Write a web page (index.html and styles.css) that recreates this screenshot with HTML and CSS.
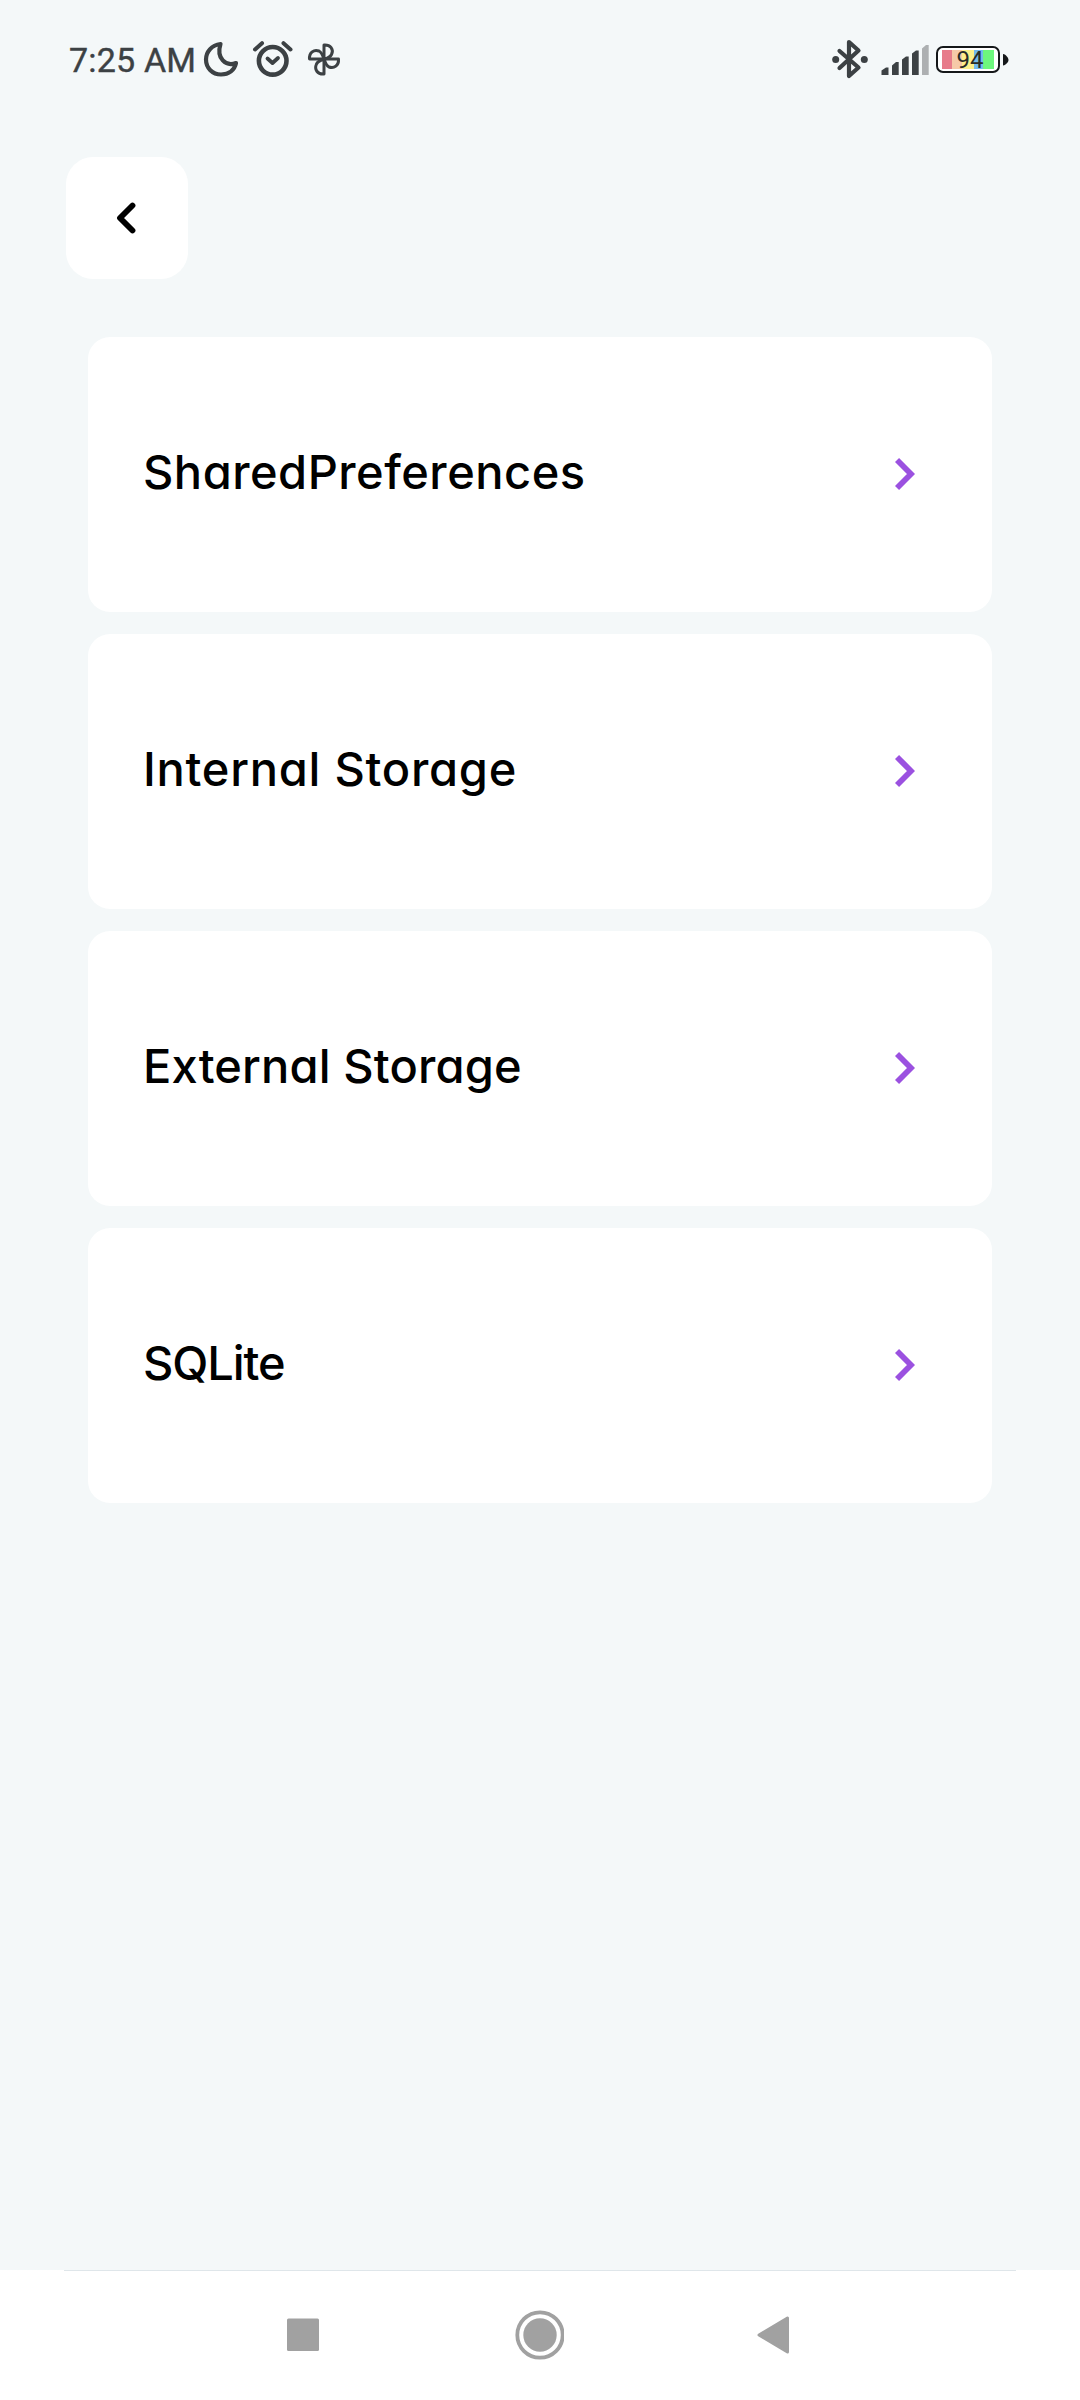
FILE: index.html
```html
<!DOCTYPE html>
<html lang="en">
<head>
<meta charset="utf-8">
<title>Storage</title>
<link rel="stylesheet" href="styles.css">
</head>
<body>
<div class="screen">
  <header class="status">
    <span class="clock">7:25 AM</span>
    <svg class="status-icons" width="140" height="44" viewBox="202 37.500 140 44" fill="none" stroke="#3c4144" stroke-width="4.200" stroke-linecap="round" stroke-linejoin="round">
      <path d="M220.500 43.500 C211.500 44.500 206 51.500 206 59 C206 67.500 212.500 74 221 74 C229 74 234.500 69.500 236 62.500 C226 66.500 216 58 220.500 43.500 Z"/>
      <circle cx="272.700" cy="60.300" r="13.800" stroke-width="4.600"/>
      <path d="M255 49 L262 42.700 M290.500 49 L283.500 42.700" stroke-width="4"/>
      <path d="M267.500 58 L272.500 62.500 L278 57.500" stroke-width="3.800"/>
      <g stroke-width="3">
        <path d="M324 58.500 V44.500 C330.500 44 334 49 331.500 54 C330 57 327 58 324 58.500 Z"/>
        <path d="M324 58.500 H338.500 C339 65 334 68.500 329 66.500 C326 65 325 61.500 324 58.500 Z"/>
        <path d="M324 58.500 V73.500 C317.500 74 314 69 316.500 63.500 C318 60.500 321 59.500 324 58.500 Z"/>
        <path d="M324 58.500 H309.500 C309 52 314 48.500 319 50.500 C322 52 323 55.500 324 58.500 Z"/>
      </g>
    </svg>
    <svg class="radio-icons" width="100" height="44" viewBox="829 37.500 100 44">
      <path d="M839.500 50.500 L858.500 67 L849 75.500 V41.500 L858.500 50 L839.500 67.500" fill="none" stroke="#3c4144" stroke-width="4.200" stroke-linecap="round" stroke-linejoin="round"/>
      <circle cx="835.700" cy="59" r="3.500" fill="#3c4144"/>
      <circle cx="864.300" cy="59" r="3.500" fill="#3c4144"/>
      <g fill="#3c4144">
        <path d="M881.500 74.500 V70 L886 67 H888.500 V74.500 Z"/>
        <path d="M892 74.500 V65 L896 61.500 H898.700 V74.500 Z"/>
        <path d="M902 74.500 V59 L906 56 H908.700 V74.500 Z"/>
        <path d="M912 74.500 V53 L916 50 H918.700 V74.500 Z"/>
      </g>
      <path d="M922 74.500 V48 L926 44.500 H928.700 V74.500 Z" fill="#adb0b2"/>
    </svg>
    <div class="battery"><div class="charge">94</div></div>
    <svg class="nub" width="6" height="14" viewBox="0 0 6 14"><path d="M0 1 C3 1.500 5.500 5 5.500 7 C5.500 9 3 12 0 12.500 Z" fill="#15181a"/></svg>
  </header>

  <main class="content">
    <button class="back" aria-label="Back">
      <svg width="24" height="36" viewBox="0 0 24 36"><path d="M17.500 5.500 L5 18 L17.500 30.500" fill="none" stroke="#000" stroke-width="5.800" stroke-linecap="round" stroke-linejoin="round"/></svg>
    </button>
    <nav class="list">
      <a class="card"><span class="label shared">SharedPreferences</span><svg class="chevron" viewBox="0 0 20 34"><path d="M2 3 L16 17 L2 31"/></svg></a>
      <a class="card"><span class="label internal">Internal Storage</span><svg class="chevron" viewBox="0 0 20 34"><path d="M2 3 L16 17 L2 31"/></svg></a>
      <a class="card"><span class="label external">External Storage</span><svg class="chevron" viewBox="0 0 20 34"><path d="M2 3 L16 17 L2 31"/></svg></a>
      <a class="card"><span class="label sqlite">SQLite</span><svg class="chevron" viewBox="0 0 20 34"><path d="M2 3 L16 17 L2 31"/></svg></a>
    </nav>
  </main>

  <footer class="system-nav">
    <div class="divider"></div>
    <div class="keys">
      <svg width="52" height="52" viewBox="-26 -26 52 52" fill="#a1a1a1"><rect x="-16" y="-16.500" width="32" height="32.500" rx="1.500"/></svg>
      <svg width="52" height="52" viewBox="-28 -26 52 52" fill="#a1a1a1"><circle r="22.700" fill="none" stroke="#a1a1a1" stroke-width="3.800"/><circle r="16.700"/></svg>
      <svg width="52" height="52" viewBox="-26 -26 52 52" fill="#a1a1a1" stroke="#a1a1a1" stroke-width="3" stroke-linejoin="round"><path d="M-14 0 L14.500 -17 V17 Z"/></svg>
    </div>
  </footer>
</div>
</body>
</html>
```
FILE: styles.css
```css
* { box-sizing: border-box; }

body {
  margin: 0;
  background: #f4f8f9;
}

svg { display: block; flex: none; }

.screen {
  width: 1080px;
  height: 2400px;
  display: flex;
  flex-direction: column;
}

.status {
  height: 119px;
  padding: 0 71px 0 69px;
  display: flex;
  align-items: center;
  font-family: Roboto, sans-serif;
  color: #3c4144;
}

.clock {
  width: 133px;
  flex: none;
  font-size: 34px;
  -webkit-text-stroke: 0.4px #3c4144;
  line-height: 40px;
  letter-spacing: 0.2px;
  white-space: nowrap;
}

.radio-icons { margin-left: auto; }

.battery {
  width: 64px;
  height: 27px;
  margin-left: 7px;
  padding: 2px 4px;
  border: 2px solid #15181a;
  border-radius: 7px;
  background: #fff;
}

.charge {
  height: 19px;
  padding-left: 4px;
  background: linear-gradient(90deg, #e77b8a 0 20%, #f6c9a8 20% 39%, #fcf08b 39% 61%, #72b9ed 61% 79%, #6df77d 79%);
  font-size: 24px;
  line-height: 21px;
  text-align: center;
  color: #292d27;
}

.nub { margin-left: 3px; }

.content {
  flex: 1;
  padding: 38px 88px 0 66px;
}

.back {
  width: 122px;
  height: 122px;
  padding: 0;
  display: flex;
  align-items: center;
  justify-content: center;
  border: 0;
  border-radius: 27px;
  background: #fff;
}

.list {
  margin: 58px 0 0 22px;
  display: flex;
  flex-direction: column;
  gap: 22px;
}

.card {
  height: 275px;
  padding: 0 77px 1px 55px;
  display: flex;
  align-items: center;
  justify-content: space-between;
  border-radius: 22px;
  background: #fff;
}

.label {
  padding-bottom: 4px;
  font: 500 47px/60px Inter, sans-serif;
  font-feature-settings: "cv11" 1;
  white-space: nowrap;
  color: #000;
}

.shared { letter-spacing: 0.5px; }
.internal { letter-spacing: 0.75px; }
.external { letter-spacing: 0.15px; }
.sqlite { letter-spacing: -1.1px; }

.chevron {
  width: 20px;
  height: 34px;
  fill: none;
  stroke: #9b51e0;
  stroke-width: 5.8;
}

.system-nav {
  height: 130px;
  background: #fff;
}

.divider {
  height: 1px;
  margin: 0 64px;
  background: #dfe6ea;
}

.keys {
  padding: 38px 281px 0 277px;
  display: flex;
  justify-content: space-between;
}
```
